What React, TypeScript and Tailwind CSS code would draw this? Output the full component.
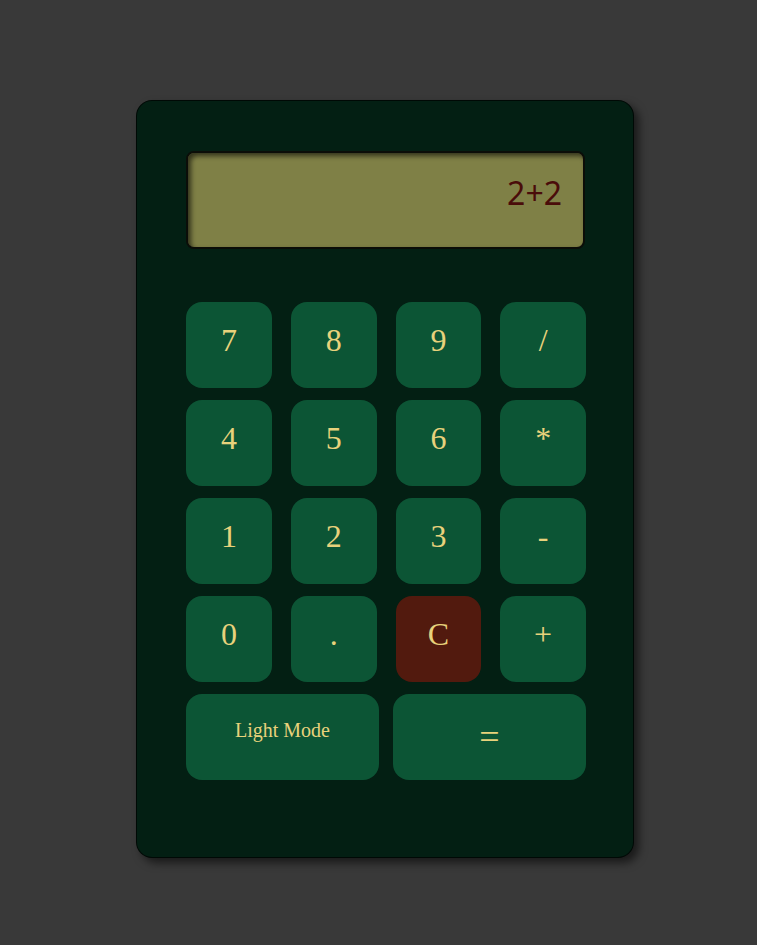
const keys = ['7', '8', '9', '/', '4', '5', '6', '*', '1', '2', '3', '-', '0', '.', 'C', '+']

const Key = ({ label }: { label: string }) => {
  const isClear = label === 'C'
  return (
    <button
      className={
        'h-[86px] rounded-[16px] flex items-center justify-center pb-[10px] text-[32px] text-[#e8d27c] ' +
        (isClear ? 'bg-[#521a0e]' : 'bg-[#0c5535]')
      }
      style={{ fontFamily: '"Liberation Serif", serif' }}
    >
      {label}
    </button>
  )
}

export default function App() {
  return (
    <div className="min-h-screen w-full bg-[#393939] pl-[136px] pt-[100px]">
      <div className="w-[498px] h-[758px] rounded-[16px] bg-[#031f13] border border-black/70 shadow-[5px_5px_8px_rgba(0,0,0,0.55)] pl-[49px] pt-[50px]">
        <div
          className="w-[399px] h-[98px] rounded-[8px] bg-[#7f8046] border-2 border-[#0b0d08] shadow-[inset_3px_3px_5px_rgba(0,0,0,0.6)] flex justify-end items-start pt-[16px] pr-[21px] text-[32px] text-[#4a0c0a]"
          style={{ fontFamily: '"Noto Sans", sans-serif' }}
        >
          2+2
        </div>

        <div className="mt-[53px] w-[400px] grid grid-cols-4 gap-x-[19px] gap-y-[12px]">
          {keys.map((k) => (
            <Key key={k} label={k} />
          ))}
        </div>

        <div className="mt-[12px] w-[400px] grid grid-cols-2 gap-x-[14px]" style={{ fontFamily: '"Liberation Serif", serif' }}>
          <button className="h-[86px] rounded-[16px] bg-[#0c5535] text-[#e8d27c] text-[20px] flex items-center justify-center pb-[14px]">
            Light Mode
          </button>
          <button className="h-[86px] rounded-[16px] bg-[#0c5535] text-[#e8d27c] text-[36px] flex items-center justify-center pb-0">
            =
          </button>
        </div>
      </div>
    </div>
  )
}
